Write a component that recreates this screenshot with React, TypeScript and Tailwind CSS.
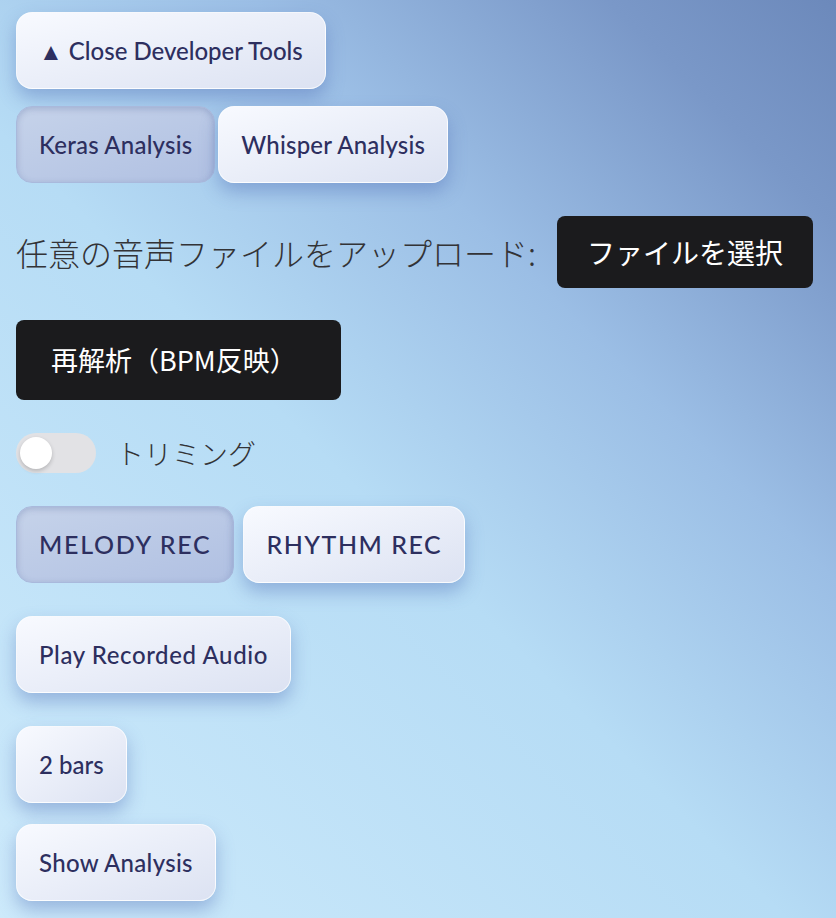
import { useState } from 'react';

const glassBtn =
  'rounded-[16px] border border-white/70 bg-gradient-to-br from-[#f8faff] to-[#dce2f2] px-[22px] py-[21px] text-[24px] leading-[33px] font-medium text-[#2d2f5f] shadow-[0_9px_18px_rgba(70,100,175,0.38)] whitespace-nowrap';

const activeBtn =
  'rounded-[16px] border border-[#a9b9dc] bg-gradient-to-br from-[#c6d3ea] to-[#b0c0e2] px-[22px] py-[21px] text-[24px] leading-[33px] font-medium text-[#2d2f5f] shadow-[inset_0_2px_6px_rgba(60,80,140,0.25)] whitespace-nowrap';

const latin = { fontFamily: 'Lato, "Noto Sans", sans-serif' };
const jp = { fontFamily: '"Noto Sans CJK JP", "Noto Sans", sans-serif' };

const App = () => {
  const [mode, setMode] = useState<'keras' | 'whisper'>('keras');
  const [rec, setRec] = useState<'melody' | 'rhythm'>('melody');
  const [trim, setTrim] = useState(false);

  return (
    <div
      className="min-h-screen w-full bg-[linear-gradient(45deg,#cdeafb_0%,#b6dcf5_45%,#9bbee5_67%,#7a98c8_87%,#6c89bb_100%)] px-4 pt-[12px] pb-6"
      style={latin}
    >
      <div className="flex flex-col items-start">
        <button className={glassBtn}>▲ Close Developer Tools</button>

        <div className="mt-[17px] flex items-center gap-[3px]">
          <button
            className={`${mode === 'keras' ? activeBtn : glassBtn} tracking-[0.2px]`}
            onClick={() => setMode('keras')}
          >
            Keras Analysis
          </button>
          <button
            className={`${mode === 'whisper' ? activeBtn : glassBtn} tracking-[0.2px]`}
            onClick={() => setMode('whisper')}
          >
            Whisper Analysis
          </button>
        </div>

        <div className="mt-[33px] flex items-center gap-[21px]" style={jp}>
          <span className="text-[32px] font-light text-[#333336]">
            任意の音声ファイルをアップロード:
          </span>
          <button className="h-[72px] rounded-[8px] bg-[#1b1b1d] px-[30px] text-[28px] text-white">
            ファイルを選択
          </button>
        </div>

        <button
          className="mt-[32px] h-[80px] rounded-[8px] bg-[#1b1b1d] pl-[35px] pr-[44px] text-[27px] text-white"
          style={jp}
        >
          再解析（BPM反映）
        </button>

        <div className="mt-[32px] flex items-center gap-[20px]" style={jp}>
          <button
            onClick={() => setTrim(!trim)}
            className={`flex h-[40px] w-[80px] items-center rounded-full px-[4px] ${
              trim ? 'justify-end bg-[#4a90e2]' : 'justify-start bg-[#e2e2e5]'
            }`}
          >
            <span className="h-[32px] w-[32px] rounded-full bg-white shadow-[0_2px_4px_rgba(0,0,0,0.2)]" />
          </button>
          <span className="text-[28px] font-light text-[#333336]">トリミング</span>
        </div>

        <div className="mt-[32px] flex items-center gap-[9px]">
          <button
            className={`${rec === 'melody' ? activeBtn : glassBtn} text-[25px] tracking-[1.7px]`}
            onClick={() => setRec('melody')}
          >
            MELODY REC
          </button>
          <button
            className={`${rec === 'rhythm' ? activeBtn : glassBtn} text-[25px] tracking-[1.5px]`}
            onClick={() => setRec('rhythm')}
          >
            RHYTHM REC
          </button>
        </div>

        <button className={`mt-[33px] ${glassBtn} tracking-[0.6px]`}>Play Recorded Audio</button>

        <button className={`mt-[33px] ${glassBtn}`}>2 bars</button>

        <button className={`mt-[21px] ${glassBtn} tracking-[0.3px]`}>Show Analysis</button>
      </div>
    </div>
  );
};

export default App;
